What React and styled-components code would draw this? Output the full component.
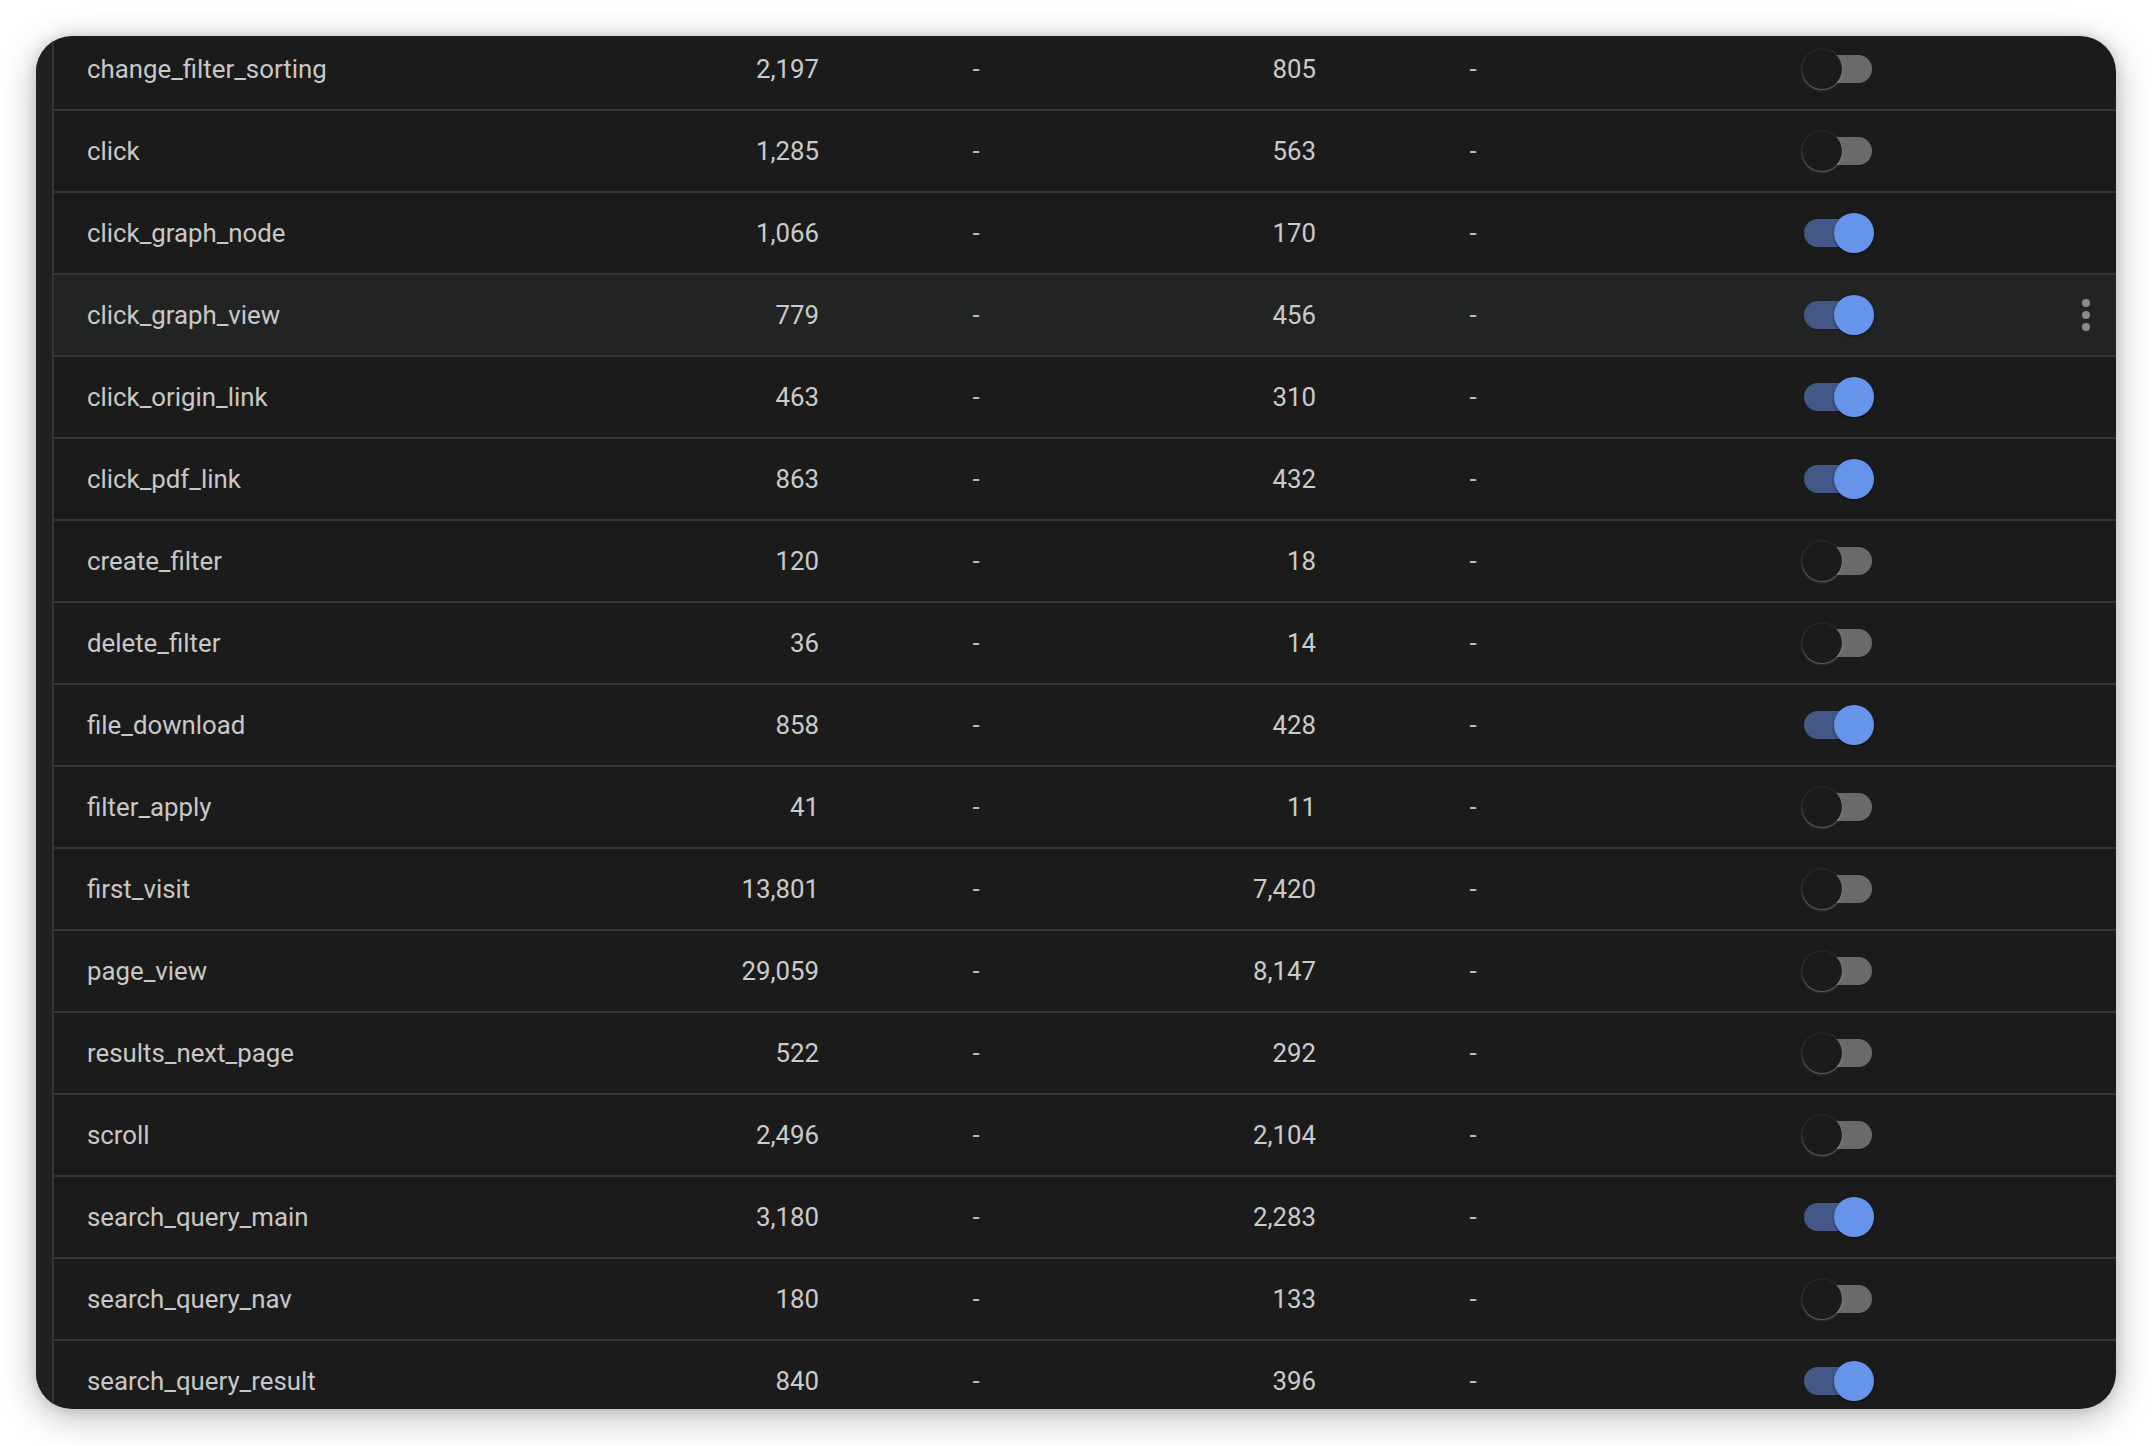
import { useState } from "react";
import styled, { createGlobalStyle } from "styled-components";

const GlobalStyle = createGlobalStyle`
    html, body {
        margin: 0;
        padding: 0;
        background: #ffffff;
    }
    body {
        font-family: Roboto, "Liberation Sans", sans-serif;
    }
`;

const events = [
    { name: "change_filter_sorting", count: "2,197", users: "805", on: false },
    { name: "click", count: "1,285", users: "563", on: false },
    { name: "click_graph_node", count: "1,066", users: "170", on: true },
    { name: "click_graph_view", count: "779", users: "456", on: true, hover: true },
    { name: "click_origin_link", count: "463", users: "310", on: true },
    { name: "click_pdf_link", count: "863", users: "432", on: true },
    { name: "create_filter", count: "120", users: "18", on: false },
    { name: "delete_filter", count: "36", users: "14", on: false },
    { name: "file_download", count: "858", users: "428", on: true },
    { name: "filter_apply", count: "41", users: "11", on: false },
    { name: "first_visit", count: "13,801", users: "7,420", on: false },
    { name: "page_view", count: "29,059", users: "8,147", on: false },
    { name: "results_next_page", count: "522", users: "292", on: false },
    { name: "scroll", count: "2,496", users: "2,104", on: false },
    { name: "search_query_main", count: "3,180", users: "2,283", on: true },
    { name: "search_query_nav", count: "180", users: "133", on: false },
    { name: "search_query_result", count: "840", users: "396", on: true },
];

const Page = styled.div`
    padding: 36px;
`;

const Window = styled.div`
    display: flex;
    height: 1373px;
    border-radius: 36px;
    overflow: hidden;
    background-color: #1b1b1b;
    box-shadow: 0 8px 36px rgba(0, 0, 0, 0.28), 0 0 12px rgba(0, 0, 0, 0.12);
`;

const SideStrip = styled.div`
    width: 16px;
    flex-shrink: 0;
    background-color: #1f2120;
    border-right: 2px solid #333338;
`;

const TableArea = styled.div`
    flex: 1;
    overflow: hidden;
`;

/* the list is scrolled a little, first row is partly hidden */
const Rows = styled.div`
    margin-top: -7px;
`;

const Row = styled.div`
    display: grid;
    grid-template-columns: 532px 200px 314px 183px 314px 1fr 60px;
    align-items: center;
    height: 80px;
    padding-left: 33px;
    border-bottom: 2px solid #333338;
    background-color: ${({ $hover }) => ($hover ? "#222424" : "transparent")};
    color: #c8c8c8;
    font-size: 25.8px;
`;

const Name = styled.div`
    white-space: nowrap;
`;

const Num = styled.div`
    text-align: right;
    color: #cbcbcb;
`;

const Dash = styled.div`
    text-align: center;
    color: #bdbdbd;
`;

const ToggleCell = styled.div`
    display: flex;
    padding-left: 174px;
`;

const Track = styled.button`
    position: relative;
    width: 68px;
    height: 28px;
    padding: 0;
    border: none;
    border-radius: 14px;
    cursor: pointer;
    background-color: ${({ $on }) => ($on ? "#435887" : "#6a6a6a")};
`;

const Thumb = styled.span`
    position: absolute;
    top: -6px;
    left: ${({ $on }) => ($on ? "30px" : "-2px")};
    width: 40px;
    height: 40px;
    border-radius: 50%;
    background-color: ${({ $on }) => ($on ? "#6694eb" : "#1b1b1b")};
    box-shadow: ${({ $on }) =>
        $on
            ? "0 1px 3px rgba(0, 0, 0, 0.5)"
            : "0 1px 2px rgba(210, 210, 210, 0.45), 0 0 1px rgba(210, 210, 210, 0.2)"};
`;

const MenuCell = styled.div`
    display: flex;
    justify-content: center;
`;

const Kebab = styled.div`
    display: flex;
    flex-direction: column;
    gap: 4px;
    span {
        width: 8px;
        height: 8px;
        border-radius: 50%;
        background-color: #8a8a8a;
    }
`;

function Toggle({ on }) {
    const [checked, setChecked] = useState(on);
    return (
        <Track $on={checked} onClick={() => setChecked((c) => !c)}>
            <Thumb $on={checked} />
        </Track>
    );
}

export default function App() {
    return (
        <>
            <GlobalStyle />
            <Page>
                <Window>
                    <SideStrip />
                    <TableArea>
                        <Rows>
                            {events.map((ev) => (
                                <Row key={ev.name} $hover={ev.hover}>
                                    <Name>{ev.name}</Name>
                                    <Num>{ev.count}</Num>
                                    <Dash>-</Dash>
                                    <Num>{ev.users}</Num>
                                    <Dash>-</Dash>
                                    <ToggleCell>
                                        <Toggle on={ev.on} />
                                    </ToggleCell>
                                    <MenuCell>
                                        {ev.hover && (
                                            <Kebab>
                                                <span />
                                                <span />
                                                <span />
                                            </Kebab>
                                        )}
                                    </MenuCell>
                                </Row>
                            ))}
                        </Rows>
                    </TableArea>
                </Window>
            </Page>
        </>
    );
}
